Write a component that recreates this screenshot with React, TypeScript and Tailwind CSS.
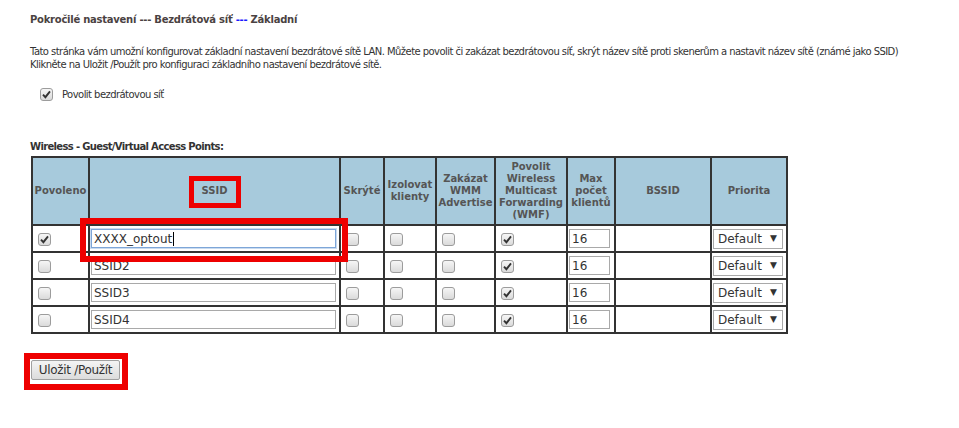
import React from 'react'

const Check = ({ checked = false }: { checked?: boolean }) => (
  <span className="ml-[4px] inline-flex h-[13px] w-[13px] items-center justify-center rounded-[3px] border border-[#9c9c9c] bg-gradient-to-b from-[#f6f6f6] to-[#dadada] align-middle">
    {checked && (
      <svg width="9" height="9" viewBox="0 0 9 9">
        <path d="M1 4.6 L3.4 7.2 L8 1.4" stroke="#333" strokeWidth="1.9" fill="none" />
      </svg>
    )}
  </span>
)

const Select = () => (
  <div className="flex h-[20px] w-[70px] items-center justify-between border border-[#a9a9a9] bg-white pl-[4px] pr-[5px] text-[12px] text-[#333]">
    <span>Default</span>
    <span className="text-[9px]">▼</span>
  </div>
)

const rows = [
  { on: true, ssid: 'XXXX_optout', focus: true },
  { on: false, ssid: 'SSID2' },
  { on: false, ssid: 'SSID3' },
  { on: false, ssid: 'SSID4' },
]

const th = 'border-2 border-[#333] bg-[#a7cadc] px-[1px] text-center align-middle font-bold text-[#555] text-[10px] leading-[12px]'
const td = 'border-2 border-[#333] px-[1px] align-middle'

export default function App() {
  return (
    <div className="relative min-h-screen bg-white pl-[30px] pt-[13px] text-[#333] [font-family:'DejaVu_Sans',sans-serif] text-[10px]">
      <h1 className="text-[10px] font-bold leading-[14px] tracking-[-0.25px] text-[#4a4242]">
        Pokročilé nastavení --- Bezdrátová síť <span className="text-[#1a1aff]">---</span> Základní
      </h1>

      <p className="mt-[18px] leading-[13px] tracking-[-0.55px]">
        Tato stránka vám umožní konfigurovat základní nastavení bezdrátové sítě LAN. Můžete povolit či zakázat bezdrátovou síť, skrýt název sítě proti skenerům a nastavit název sítě (známé jako SSID)
        <br />
        Klikněte na Uložit /Použít pro konfiguraci základního nastavení bezdrátové sítě.
      </p>

      <div className="mt-[16px] flex items-center gap-[9px] pl-[6px]">
        <Check checked />
        <span className="tracking-[-0.55px]">Povolit bezdrátovou síť</span>
      </div>

      <div className="mt-[39px] font-bold leading-[12px] tracking-[-0.65px]">Wireless - Guest/Virtual Access Points:</div>

      <table className="mt-[3px] ml-[1px] table-fixed border-collapse">
        <colgroup>
          <col className="w-[57px]" />
          <col className="w-[251px]" />
          <col className="w-[44px]" />
          <col className="w-[52px]" />
          <col className="w-[59px]" />
          <col className="w-[72px]" />
          <col className="w-[48px]" />
          <col className="w-[96px]" />
          <col className="w-[76px]" />
        </colgroup>
        <thead>
          <tr className="h-[68px]">
            <th className={th}>Povoleno</th>
            <th className={th}>SSID</th>
            <th className={th}>Skrýté</th>
            <th className={th}>Izolovat klienty</th>
            <th className={th}>Zakázat WMM Advertise</th>
            <th className={th}>Povolit Wireless Multicast Forwarding (WMF)</th>
            <th className={th}>Max počet klientů</th>
            <th className={th}>BSSID</th>
            <th className={th}>Priorita</th>
          </tr>
        </thead>
        <tbody>
          {rows.map((r) => (
            <tr key={r.ssid} className="h-[27px]">
              <td className={td}><Check checked={r.on} /></td>
              <td className={td}>
                <div
                  className={`flex h-[19px] w-[245px] items-center border px-[2px] text-[12px] text-[#333] ${
                    r.focus ? 'border-[#7ea6d8] shadow-[0_0_0_1px_#c9dbf0]' : 'border-[#a9a9a9]'
                  }`}
                >
                  {r.ssid}
                  {r.focus && <span className="ml-[1px] h-[14px] w-px bg-black" />}
                </div>
              </td>
              <td className={td}><Check /></td>
              <td className={td}><Check /></td>
              <td className={td}><Check /></td>
              <td className={td}><Check checked /></td>
              <td className={td}>
                <div className="flex h-[19px] w-[41px] items-center border border-[#a9a9a9] px-[2px] text-[12px]">16</div>
              </td>
              <td className={td}></td>
              <td className={td}><Select /></td>
            </tr>
          ))}
        </tbody>
      </table>

      <button className="mt-[26px] ml-[1px] h-[20px] w-[89px] rounded-[2px] border border-[#a0a0a0] bg-gradient-to-b from-[#f4f4f4] to-[#dcdcdc] text-[12px] text-[#333] tracking-[-0.3px]">
        Uložit /Použít
      </button>

      <div className="pointer-events-none absolute left-[189px] top-[176px] h-[32px] w-[52px] border-[5px] border-[#ee0000]" />
      <div className="pointer-events-none absolute left-[80px] top-[218px] h-[44px] w-[268px] border-[6px] border-[#ee0000]" />
      <div className="pointer-events-none absolute left-[24px] top-[353px] h-[37px] w-[104px] border-[6px] border-[#ee0000]" />
    </div>
  )
}
